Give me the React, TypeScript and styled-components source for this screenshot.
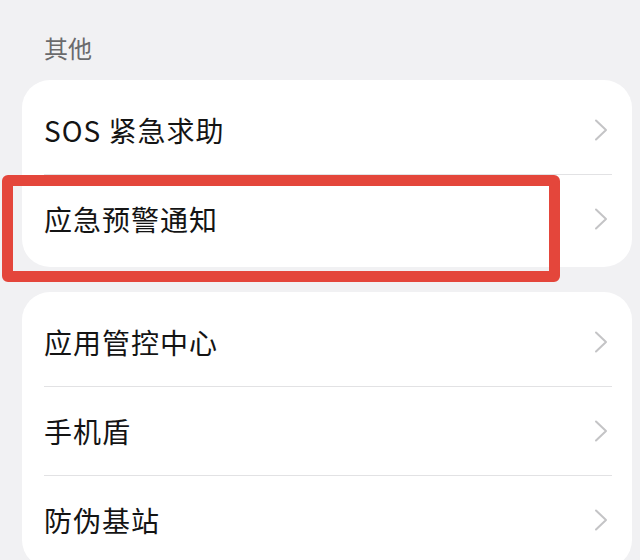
import React from "react";
import styled, { createGlobalStyle } from "styled-components";

const GlobalStyle = createGlobalStyle`
  html, body {
    margin: 0;
    padding: 0;
    background: #f1f1f3;
    width: 640px;
    height: 560px;
    overflow: hidden;
  }
  body {
    font-family: "Noto Sans CJK SC", "Noto Sans", sans-serif;
  }
`;

const Page = styled.div`
  display: flex;
  flex-direction: column;
  padding: 0 8px 0 22px;
  height: 560px;
  box-sizing: border-box;
`;

const SectionTitle = styled.div`
  font-size: 24px;
  line-height: 34px;
  color: #6a6a6c;
  padding: 31px 0 15px 22px;
`;

const Card = styled.div<{ $gap?: number }>`
  position: relative;
  background: #ffffff;
  border-radius: 28px;
  padding: 6px 0 4px;
  margin-bottom: ${(p) => p.$gap ?? 0}px;
  display: flex;
  flex-direction: column;
`;

const Row = styled.div`
  position: relative;
  height: 88px;
  display: flex;
  align-items: center;
  justify-content: space-between;
  padding: 0 24px 0 22px;
`;

const Label = styled.span`
  font-size: 28px;
  color: #141414;
  letter-spacing: 1px;
`;

const Divider = styled.div`
  height: 1px;
  background: #e2e2e4;
  margin: 0 20px 0 22px;
`;

const Highlight = styled.div`
  position: absolute;
  left: -20px;
  top: 95px;
  width: 558px;
  height: 107px;
  border: 11px solid #e4463b;
  border-radius: 6px;
  box-sizing: border-box;
  pointer-events: none;
`;

const Chevron = () => (
  <svg width="14" height="22" viewBox="0 0 14 22" fill="none">
    <path d="M2 1.5 L12 11 L2 20.5" stroke="#c4c4c6" strokeWidth="2" strokeLinecap="round" strokeLinejoin="round" />
  </svg>
);

const Item = ({ label }: { label: string }) => (
  <Row>
    <Label>{label}</Label>
    <Chevron />
  </Row>
);

export default function App() {
  return (
    <>
      <GlobalStyle />
      <Page>
        <SectionTitle>其他</SectionTitle>
        <Card $gap={25}>
          <Item label="SOS 紧急求助" />
          <Divider />
          <Item label="应急预警通知" />
          <Highlight />
        </Card>
        <Card>
          <Item label="应用管控中心" />
          <Divider />
          <Item label="手机盾" />
          <Divider />
          <Item label="防伪基站" />
        </Card>
      </Page>
    </>
  );
}
